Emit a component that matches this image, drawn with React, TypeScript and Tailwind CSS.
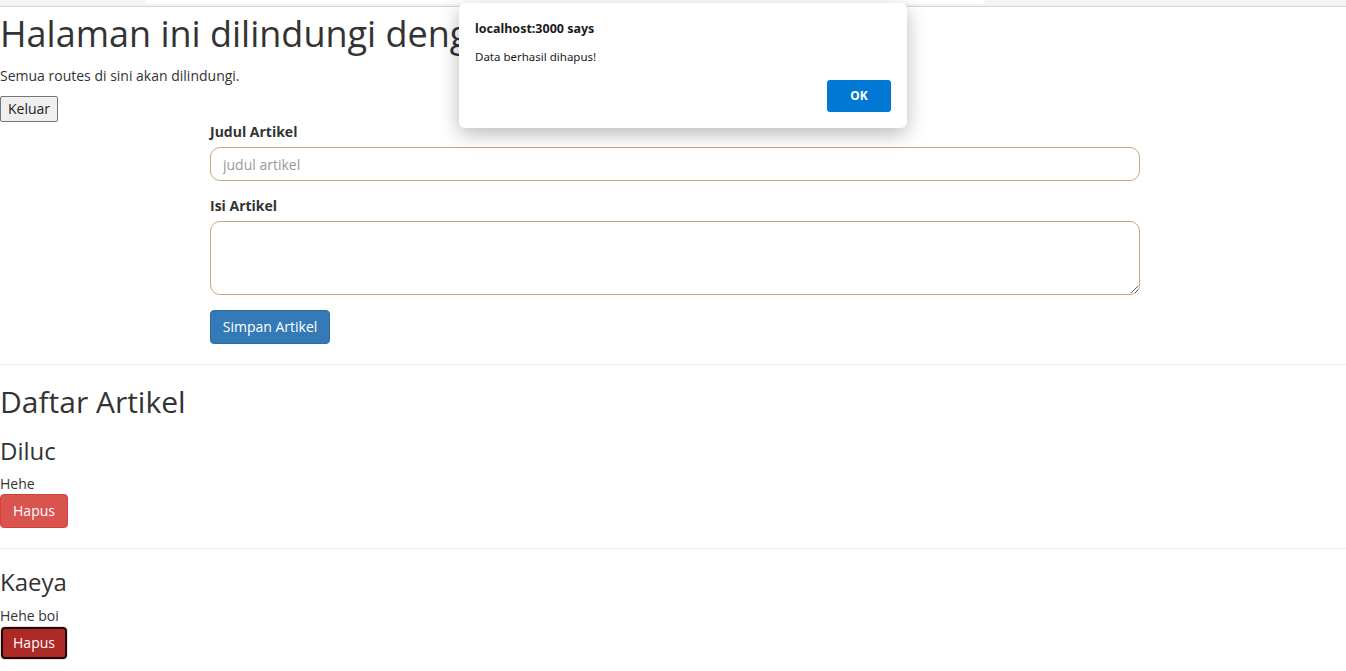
import React from "react";

export default function App() {
  return (
    <div className="relative min-h-[671px] bg-white font-['Open_Sans',sans-serif] text-[14px] leading-[20px] text-[#333]">
      {/* top chrome strip */}
      <div className="h-[7px] bg-[#f3f3f3] border-b border-[#d6d6d6] flex">
        <div className="ml-[145px] w-[840px] h-[4px] bg-white rounded-b-[6px]" />
      </div>

      <h1 className="mt-[7px] text-[36px] leading-[40px] font-normal">Halaman ini dilindungi dengan login</h1>
      <p className="mt-[12px]">Semua routes di sini akan dilindungi.</p>
      <button className="mt-[10px] h-[26px] px-[7px] border border-[#767676] bg-[#efefef] rounded-[2px] text-[14px] text-[#222] font-['Open_Sans',sans-serif]">
        Keluar
      </button>

      <form className="ml-[210px] w-[930px]">
        <label className="block font-bold">Judul Artikel</label>
        <input
          className="mt-[5px] block w-full h-[34px] px-[12px] border border-[#c6a87c] rounded-[10px] text-[14px] placeholder:text-[#999] outline-none"
          placeholder="judul artikel"
        />
        <label className="mt-[15px] block font-bold">Isi Artikel</label>
        <textarea className="mt-[5px] block w-full h-[74px] px-[12px] py-[6px] border border-[#c6a87c] rounded-[10px] text-[14px] outline-none" />
        <button
          type="button"
          className="mt-[15px] h-[34px] w-[120px] bg-[#337ab7] border border-[#2e6da4] rounded-[4px] text-white text-[14px]"
        >
          Simpan Artikel
        </button>
      </form>

      <hr className="mt-[20px] border-0 border-t border-[#eee]" />

      <h2 className="mt-[20px] text-[30px] leading-[33px] font-normal">Daftar Artikel</h2>

      <h3 className="mt-[20px] text-[24px] leading-[26.4px] font-normal">Diluc</h3>
      <p className="mt-[10px]">Hehe</p>
      <button className="block h-[34px] w-[68px] bg-[#d9534f] border border-[#d43f3a] rounded-[4px] text-white text-[14px]">
        Hapus
      </button>
      <hr className="mt-[20px] border-0 border-t border-[#eee]" />

      <h3 className="mt-[20px] text-[24px] leading-[26.4px] font-normal">Kaeya</h3>
      <p className="mt-[10px]">Hehe boi</p>
      <div className="w-[68px] h-[34px] rounded-[5px] border border-[#f3d6d6] p-0">
        <button className="block h-full w-full bg-[#ac2925] border-2 border-[#1a0a0a] rounded-[4px] text-white text-[14px] leading-[18px]">
          Hapus
        </button>
      </div>

      {/* alert dialog */}
      <div className="absolute left-[459px] top-[3px] w-[448px] h-[125px] bg-white rounded-[6px] shadow-[0_6px_20px_rgba(0,0,0,0.28)] font-['Noto_Sans','Open_Sans',sans-serif] text-[#1a1a1a]">
        <div className="pl-[16px] pt-[17px] text-[12.5px] leading-[18px] font-bold">localhost:3000 says</div>
        <div className="pl-[16px] mt-[11px] text-[11.5px] leading-[16px]">Data berhasil dihapus!</div>
        <div className="flex justify-end pr-[16px] mt-[15px]">
          <button className="w-[64px] h-[32px] bg-[#0078d4] rounded-[3px] text-white text-[12px] font-bold">OK</button>
        </div>
      </div>
    </div>
  );
}
